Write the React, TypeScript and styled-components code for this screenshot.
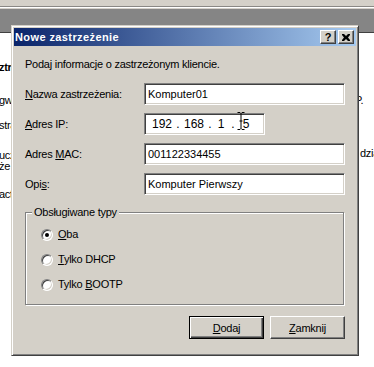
import React from "react";
import styled, { createGlobalStyle } from "styled-components";

const FACE = "#d4d0c8";

const Global = createGlobalStyle`
  html, body { margin: 0; padding: 0; background: #fff; }
  body {
    font-family: "Liberation Sans", Arial, sans-serif;
    font-size: 11px;
    color: #000;
    overflow: hidden;
  }
`;

const Screen = styled.div`
  position: relative;
  width: 374px;
  height: 367px;
  overflow: hidden;
  display: flex;
  flex-direction: column;
  background: #fff;
`;

const Header = styled.div`
  flex: none;
  background: ${FACE};
  padding-top: 6px;
`;

const HeaderRule = styled.div`
  border-top: 1px solid #8a8884;
  border-bottom: 1px solid #fff;
`;

const CaptionBand = styled.div`
  margin-top: 1px;
  height: 23px;
  background: #858585;
  border-bottom: 1px solid #404040;
`;

const Content = styled.div`
  flex: 1;
  display: grid;
  grid-template-columns: 11px 348px 1fr;
`;

const SideColumn = styled.div`
  overflow: hidden;
  display: flex;
  flex-direction: column;
  white-space: nowrap;
`;

const BgLine = styled.div<{ $mt: number; $bold?: boolean; $indent?: number }>`
  margin-top: ${(p) => p.$mt}px;
  margin-left: ${(p) => p.$indent ?? 0}px;
  font-weight: ${(p) => (p.$bold ? 700 : 400)};
  line-height: 11px;
  font-size: 11px;
  letter-spacing: -0.3px;
`;

const Dialog = styled.div`
  position: absolute;
  left: 11px;
  top: 25px;
  width: 348px;
  height: 331px;
  box-sizing: border-box;
  background: ${FACE};
  border: 1px solid;
  border-color: ${FACE} #404040 #404040 ${FACE};
  box-shadow: inset 1px 1px 0 #fff, inset -1px -1px 0 #808080;
  padding: 2px;
  display: flex;
  flex-direction: column;
  letter-spacing: -0.25px;
`;

const TitleBar = styled.div`
  height: 18px;
  flex: none;
  background: linear-gradient(to right, #0a246a, #a6caf0);
  display: flex;
  align-items: center;
  padding: 0 2px 0 1px;
`;

const TitleText = styled.span`
  flex: 1;
  color: #fff;
  font-weight: 700;
  font-size: 11px;
  letter-spacing: 0.4px;
`;

const CaptionButtons = styled.div`
  display: flex;
  gap: 2px;
  letter-spacing: 0;
`;

const CaptionButton = styled.div`
  width: 16px;
  height: 14px;
  box-sizing: border-box;
  background: ${FACE};
  border: 1px solid;
  border-color: #fff #404040 #404040 #fff;
  box-shadow: inset -1px -1px 0 #808080;
  display: flex;
  align-items: center;
  justify-content: center;
  font-weight: 700;
  font-size: 11px;
  line-height: 1;
`;

const Body = styled.div`
  display: flex;
  flex-direction: column;
  padding: 12px 11px 0 11px;
`;

const Intro = styled.div`
  line-height: 13px;
`;

const FormGrid = styled.div`
  margin-top: 12px;
  display: grid;
  grid-template-columns: 119px 201px;
  row-gap: 8px;
  align-items: center;
`;

const Label = styled.label`
  line-height: 13px;
`;

const Mn = styled.span`
  text-decoration: underline;
`;

const Field = styled.div<{ $width?: number }>`
  position: relative;
  width: ${(p) => (p.$width ? `${p.$width}px` : "auto")};
  height: 22px;
  box-sizing: border-box;
  background: #fff;
  border: 1px solid;
  border-color: #808080 #fff #fff #808080;
  box-shadow: inset 1px 1px 0 #404040, inset -1px -1px 0 ${FACE};
  display: flex;
  align-items: center;
  padding-left: 3px;
  font-size: 11px;
  letter-spacing: 0;
`;

const IpRow = styled.div`
  display: flex;
  align-items: center;
  font-size: 12px;
  padding-left: 3px;
`;

const Octet = styled.span<{ $w: number }>`
  display: inline-block;
  width: ${(p) => p.$w}px;
  text-align: center;
`;

const Cursor = styled.svg`
  position: absolute;
  left: 92px;
  top: -2px;
`;

const Group = styled.div`
  position: relative;
  margin-top: 17px;
  height: 93px;
  box-sizing: border-box;
  border: 1px solid #808080;
  box-shadow: 1px 1px 0 #fff, inset 1px 1px 0 #fff;
  margin-right: 1px;
  padding: 15px 0 0 15px;
  display: flex;
  flex-direction: column;
  gap: 12px;
`;

const Legend = styled.span`
  position: absolute;
  left: 6px;
  top: -7px;
  padding: 0 2px;
  background: ${FACE};
  line-height: 13px;
`;

const RadioRow = styled.div`
  display: flex;
  align-items: center;
  gap: 5px;
  line-height: 13px;
`;

const RadioCircle = styled.span<{ $checked?: boolean }>`
  position: relative;
  width: 12px;
  height: 12px;
  box-sizing: border-box;
  border-radius: 50%;
  background: #fff;
  border: 1px solid;
  border-color: #808080 #fff #fff #808080;
  box-shadow: inset 1px 1px 0 #404040, inset -1px -1px 0 ${FACE};
  &::after {
    content: "";
    display: ${(p) => (p.$checked ? "block" : "none")};
    position: absolute;
    left: 3px;
    top: 3px;
    width: 4px;
    height: 4px;
    border-radius: 50%;
    background: #000;
  }
`;

const ButtonRow = styled.div`
  display: flex;
  justify-content: flex-end;
  gap: 6px;
  margin-top: 11px;
`;

const Button = styled.div<{ $default?: boolean; $w: number }>`
  width: ${(p) => p.$w}px;
  height: 23px;
  box-sizing: border-box;
  background: ${FACE};
  display: flex;
  align-items: center;
  justify-content: center;
  border: 1px solid;
  border-color: ${(p) => (p.$default ? "#000" : "#fff #404040 #404040 #fff")};
  box-shadow: ${(p) =>
    p.$default
      ? "inset 1px 1px 0 #fff, inset -1px -1px 0 #404040, inset -2px -2px 0 #808080"
      : "inset -1px -1px 0 #808080"};
`;

export default function App() {
  return (
    <Screen>
      <Global />
      <Header>
        <HeaderRule />
        <CaptionBand />
      </Header>
      <Content>
        <SideColumn>
          <BgLine $mt={29} $bold $indent={-1}>ztrz</BgLine>
          <BgLine $mt={22} $indent={-1}>gwa</BgLine>
          <BgLine $mt={14} $indent={-1}>stra</BgLine>
          <BgLine $mt={19} $indent={-1}>ucz</BgLine>
          <BgLine $mt={0} $indent={-1}>że</BgLine>
          <BgLine $mt={17} $indent={-1}>act</BgLine>
        </SideColumn>
        <div />
        <SideColumn>
          <BgLine $mt={62} $indent={-4}>P.</BgLine>
          <BgLine $mt={42} $indent={1}>dział</BgLine>
        </SideColumn>
      </Content>

      <Dialog>
        <TitleBar>
          <TitleText>Nowe zastrzeżenie</TitleText>
          <CaptionButtons>
            <CaptionButton>?</CaptionButton>
            <CaptionButton>
              <svg width="8" height="7" viewBox="0 0 8 7">
                <path d="M0 0h2l2 2 2-2h2v1L6 3.5 8 6v1H6L4 5 2 7H0V6l2-2.5L0 1z" fill="#000" />
              </svg>
            </CaptionButton>
          </CaptionButtons>
        </TitleBar>
        <Body>
          <Intro>Podaj informacje o zastrzeżonym kliencie.</Intro>
          <FormGrid>
            <Label>
              <Mn>N</Mn>azwa zastrzeżenia:
            </Label>
            <Field>Komputer01</Field>
            <Label>
              <Mn>A</Mn>dres IP:
            </Label>
            <Field $width={121}>
              <IpRow>
                <Octet $w={22}>192</Octet>
                <Octet $w={10}>.</Octet>
                <Octet $w={22}>168</Octet>
                <Octet $w={10}>.</Octet>
                <Octet $w={12}>1</Octet>
                <Octet $w={12}>.</Octet>
                <Octet $w={14}>5</Octet>
              </IpRow>
              <Cursor width="8" height="18" viewBox="0 0 8 18">
                <path
                  d="M0.5 0.5h2.5l1 1 1-1h2.5M4 1.5v15M0.5 17.5h2.5l1-1 1 1h2.5M2.5 9h3"
                  stroke="#000"
                  strokeWidth="1"
                  fill="none"
                />
              </Cursor>
            </Field>
            <Label>
              Adres <Mn>M</Mn>AC:
            </Label>
            <Field>001122334455</Field>
            <Label>
              Opi<Mn>s</Mn>:
            </Label>
            <Field>Komputer Pierwszy</Field>
          </FormGrid>

          <Group>
            <Legend>Obsługiwane typy</Legend>
            <RadioRow>
              <RadioCircle $checked />
              <span>
                <Mn>O</Mn>ba
              </span>
            </RadioRow>
            <RadioRow>
              <RadioCircle />
              <span>
                <Mn>T</Mn>ylko DHCP
              </span>
            </RadioRow>
            <RadioRow>
              <RadioCircle />
              <span>
                Tylko <Mn>B</Mn>OOTP
              </span>
            </RadioRow>
          </Group>

          <ButtonRow>
            <Button $default $w={75}>
              <span>
                <Mn>D</Mn>odaj
              </span>
            </Button>
            <Button $w={75}>
              <span>
                <Mn>Z</Mn>amknij
              </span>
            </Button>
          </ButtonRow>
        </Body>
      </Dialog>
    </Screen>
  );
}
